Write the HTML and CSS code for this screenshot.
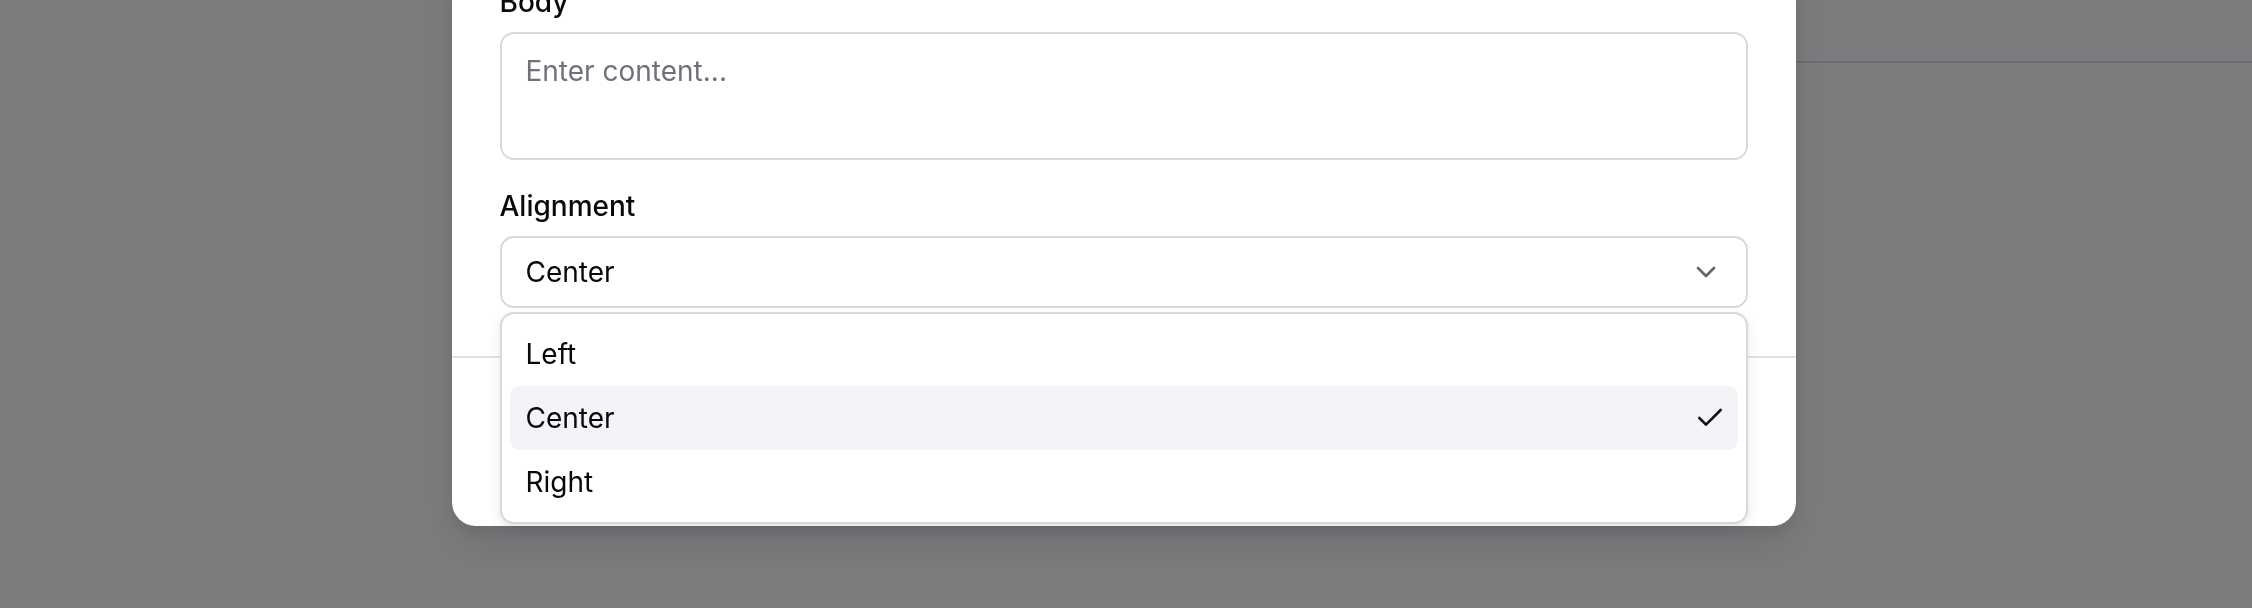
FILE: index.html
```html
<!DOCTYPE html>
<html lang="en">
<head>
<meta charset="utf-8">
<title>Edit block</title>
<link rel="stylesheet" href="styles.css">
</head>
<body>
<div class="page">
  <aside class="sidebar"></aside>
  <main class="main">
    <header class="topbar"></header>
  </main>
</div>

<div class="overlay">
  <div class="modal" role="dialog" aria-label="Edit block">
    <div class="modal-body">
      <div class="field">
        <label class="label">Body</label>
        <textarea class="textarea" placeholder="Enter content..."></textarea>
      </div>
      <div class="field field-select">
        <label class="label">Alignment</label>
        <button class="select-trigger" type="button">
          <span>Center</span>
          <svg class="chevron" viewBox="0 0 24 24" width="32" height="32" fill="none" stroke="currentColor" stroke-width="2" stroke-linecap="round" stroke-linejoin="round"><path d="m6 9 6 6 6-6"/></svg>
        </button>
        <div class="menu" role="listbox">
          <div class="option">Left</div>
          <div class="option option-active">Center
            <svg class="check" viewBox="0 0 24 24" width="32" height="32" fill="none" stroke="currentColor" stroke-width="2" stroke-linecap="round" stroke-linejoin="round"><path d="M20 6 9 17l-5-5"/></svg>
          </div>
          <div class="option">Right</div>
        </div>
      </div>
    </div>
    <div class="modal-foot">
      <button class="btn btn-outline" type="button">Cancel</button>
      <button class="btn btn-primary" type="button">Save</button>
    </div>
  </div>
</div>
</body>
</html>
```
FILE: styles.css
```css
* { box-sizing: border-box; }

html, body {
  margin: 0;
  height: 100%;
}

body {
  font-family: Inter, "Noto Sans", sans-serif;
  color: #09090b;
  background: #f9f7fd;
  overflow: hidden;
}

.page {
  display: flex;
  height: 100vh;
}

.sidebar {
  width: 1000px;
  flex: none;
}

.main {
  flex: 1;
}

.topbar {
  height: 63px;
  border-bottom: 2px solid #dcdae4;
}

.overlay {
  position: fixed;
  inset: 0;
  background: rgba(0, 0, 0, 0.5);
  display: flex;
  justify-content: center;
  align-items: flex-end;
  padding: 0 5px 82px 0;
}

.modal {
  width: 1344px;
  flex: none;
  background: #ffffff;
  border-radius: 24px;
  box-shadow: 0 20px 40px rgba(0, 0, 0, 0.10), 0 8px 16px rgba(0, 0, 0, 0.06);
  display: flex;
  flex-direction: column;
}

.modal-body {
  padding: 48px;
  display: flex;
  flex-direction: column;
  gap: 32px;
}

.field {
  display: flex;
  flex-direction: column;
  gap: 16px;
}

.field-select {
  position: relative;
}

.label {
  font-size: 28px;
  line-height: 1;
  font-weight: 500;
}

.textarea {
  font: inherit;
  font-size: 28px;
  line-height: 40px;
  color: #09090b;
  border: 2px solid #d9d8df;
  border-radius: 14px;
  padding: 17px 24px 13px;
  outline: none;
  background: #fff;
  height: 128px;
  resize: none;
  overflow: hidden;
  display: block;
}

.textarea::placeholder {
  color: #72717a;
}

.select-trigger {
  font: inherit;
  font-size: 28px;
  line-height: 40px;
  color: #09090b;
  height: 72px;
  border: 2px solid #d9d8df;
  border-radius: 14px;
  background: #fff;
  padding: 0 24px;
  display: flex;
  align-items: center;
  justify-content: space-between;
  text-align: left;
}

.chevron {
  color: #66656b;
  flex: none;
}

.menu {
  position: absolute;
  top: calc(100% + 4px);
  left: 0;
  right: 0;
  z-index: 5;
  background: #fff;
  border: 2px solid #d9d8df;
  border-radius: 14px;
  padding: 8px;
  box-shadow: 0 6px 14px rgba(40, 30, 80, 0.08), 0 2px 4px rgba(40, 30, 80, 0.05);
}

.option {
  height: 64px;
  padding: 0 12px 0 16px;
  border-radius: 10px;
  display: flex;
  align-items: center;
  justify-content: space-between;
  font-size: 28px;
  line-height: 40px;
}

.option-active {
  background: #f4f3f8;
}

.check {
  color: #111113;
  flex: none;
}

.modal-foot {
  border-top: 2px solid #e1e0e6;
  padding: 48px;
  display: flex;
  justify-content: flex-end;
  gap: 16px;
}

.btn {
  font: inherit;
  font-size: 28px;
  font-weight: 500;
  height: 72px;
  padding: 0 32px;
  border-radius: 14px;
}

.btn-outline {
  background: #fff;
  border: 2px solid #d9d8df;
  color: #09090b;
}

.btn-primary {
  background: #18181b;
  border: 2px solid #18181b;
  color: #fafafa;
}
```
